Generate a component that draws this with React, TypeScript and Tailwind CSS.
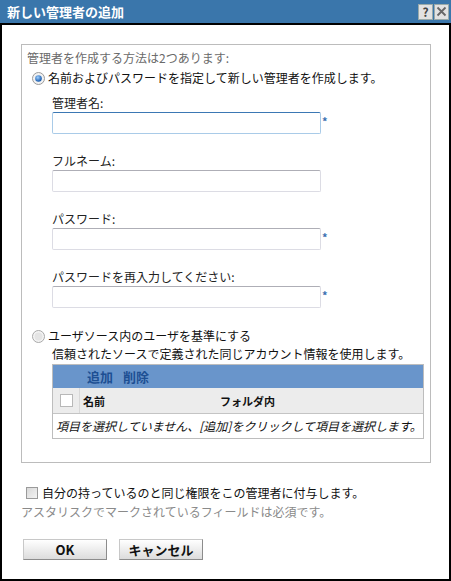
import React from "react";

const font = { fontFamily: '"Noto Sans CJK JP", "Noto Sans", sans-serif' };

function RadioOn() {
  return (
    <svg width="13" height="13" viewBox="0 0 13 13">
      <defs>
        <radialGradient id="rg1" cx="0.4" cy="0.35" r="0.6">
          <stop offset="0" stopColor="#9fd0ff" />
          <stop offset="1" stopColor="#1d5fb0" />
        </radialGradient>
      </defs>
      <circle cx="6.5" cy="6.5" r="6" fill="#f2f2f2" stroke="#9a9a9a" strokeWidth="1" />
      <circle cx="6.5" cy="6.5" r="3.3" fill="url(#rg1)" />
    </svg>
  );
}

function RadioOff() {
  return (
    <svg width="13" height="13" viewBox="0 0 13 13">
      <circle cx="6.5" cy="6.5" r="6" fill="#f4f4f4" stroke="#a8a8a8" strokeWidth="1" />
      <circle cx="6.5" cy="6.5" r="4" fill="#e4e4e4" />
    </svg>
  );
}

function Field({ label, req, focused, first }: { label: string; req?: boolean; focused?: boolean; first?: boolean }) {
  return (
    <div className={first ? "ml-[30px] mt-[10px] flex flex-col" : "ml-[30px] mt-[20px] flex flex-col"}>
      <div className="h-[14px] text-[12px] leading-[14px] text-[#222]">{label}</div>
      <div className="mt-[2px] flex items-start">
        <div
          className={
            focused
              ? "h-[22px] w-[269px] rounded-[2px] border border-[#a9cbe8] border-t-[#3b78b4] bg-white"
              : "h-[22px] w-[269px] rounded-[2px] border border-[#dcdce4] border-t-[#aeaeb6] bg-white"
          }
        />
        {req && (
          <span className="ml-[1px] mt-[3px] text-[11px] font-bold leading-[12px] text-[#3a6fb0]">*</span>
        )}
      </div>
    </div>
  );
}

export default function App() {
  return (
    <div className="flex h-[581px] w-[451px] flex-col bg-white" style={font}>
      {/* Title bar */}
      <div className="flex h-[23px] shrink-0 items-center justify-between bg-[#3a76ab] pl-[7px] pr-[2px]">
        <span className="text-[13px] font-bold leading-[16px] text-white">新しい管理者の追加</span>
        <div className="flex items-center gap-[1px]">
          <div className="flex h-[16px] w-[15px] items-center justify-center border border-[#9aa] bg-[#e2e2e2] text-[12px] font-bold leading-[14px] text-[#444]">
            ?
          </div>
          <div className="flex h-[16px] w-[15px] items-center justify-center border border-[#9aa] bg-[#e2e2e2]">
            <svg width="11" height="11" viewBox="0 0 11 11">
              <path d="M1.5 1.5 L9.5 9.5 M9.5 1.5 L1.5 9.5" stroke="#666" strokeWidth="1.8" />
            </svg>
          </div>
        </div>
      </div>
      {/* Body */}
      <div className="flex flex-1 flex-col border-x-2 border-b-2 border-t-2 border-black">
        {/* Panel */}
        <div className="ml-[19px] mt-[19px] flex w-[410px] flex-col border border-[#bcbcbc] pb-[23px]">
          <div className="ml-[5px] mt-[6px] h-[14px] text-[12px] leading-[14px] text-[#6a6a6a]">
            管理者を作成する方法は2つあります:
          </div>
          <div className="ml-[10px] mt-[5px] flex h-[16px] items-center gap-[3px]">
            <RadioOn />
            <span className="text-[12px] leading-[14px] text-[#111]">名前およびパスワードを指定して新しい管理者を作成します。</span>
          </div>
          <Field label="管理者名:" req focused first />
          <Field label="フルネーム:" />
          <Field label="パスワード:" req />
          <Field label="パスワードを再入力してください:" req />
          <div className="ml-[10px] mt-[20px] flex h-[16px] items-center gap-[3px]">
            <RadioOff />
            <span className="text-[12px] leading-[14px] text-[#111]">ユーザソース内のユーザを基準にする</span>
          </div>
          <div className="ml-[30px] mt-[3px] h-[14px] text-[12px] leading-[14px] text-[#111]">
            信頼されたソースで定義された同じアカウント情報を使用します。
          </div>
          {/* Table */}
          <div className="ml-[30px] mt-[3px] flex w-[372px] flex-col border border-[#bdbdbd]">
            <div className="flex h-[23px] items-center gap-[10px] bg-[#6995cb] pl-[34px]">
              <span className="text-[13px] font-bold leading-[16px] text-[#1d4f93]">追加</span>
              <span className="text-[13px] font-bold leading-[16px] text-[#1d4f93]">削除</span>
            </div>
            <div className="flex h-[26px] items-center border-b border-[#c4c4c4] bg-[#ececec]">
              <div className="flex h-full w-[27px] items-center justify-center border-r border-[#d8d8d8]">
                <div className="h-[13px] w-[13px] border border-[#b8b8b8] bg-white" />
              </div>
              <span className="ml-[3px] w-[137px] text-[11px] font-bold leading-[14px] text-[#111]">名前</span>
              <span className="text-[11px] font-bold leading-[14px] text-[#111]">フォルダ内</span>
            </div>
            <div className="flex h-[24px] items-center bg-white pl-[3px]">
              <span className="text-[12px] italic leading-[14px] text-[#111]">
                項目を選択していません、[追加]をクリックして項目を選択します。
              </span>
            </div>
          </div>
        </div>
        {/* Checkbox */}
        <div className="ml-[24px] mt-[22px] flex h-[16px] items-center gap-[4px]">
          <div className="h-[12px] w-[12px] border border-[#9a9a9a] bg-gradient-to-br from-[#d8d8d8] to-[#f4f4f4]" />
          <span className="text-[12px] leading-[14px] text-[#111]">自分の持っているのと同じ権限をこの管理者に付与します。</span>
        </div>
        <div className="ml-[19px] mt-[4px] h-[14px] text-[12px] leading-[14px] text-[#8a8a8a]">
          アスタリスクでマークされているフィールドは必須です。
        </div>
        {/* Buttons */}
        <div className="ml-[21px] mt-[20px] flex gap-[12px]">
          <button className="flex h-[21px] w-[84px] items-center justify-center border border-[#8c8c8c] border-l-[#c8c8c8] border-t-[#c8c8c8] bg-gradient-to-b from-white to-[#dcdcdc] text-[13px] font-bold leading-[16px] text-[#111]">
            OK
          </button>
          <button className="flex h-[21px] w-[84px] items-center justify-center border border-[#8c8c8c] border-l-[#c8c8c8] border-t-[#c8c8c8] bg-gradient-to-b from-white to-[#dcdcdc] text-[13px] font-bold leading-[16px] text-[#111]">
            キャンセル
          </button>
        </div>
      </div>
    </div>
  );
}
